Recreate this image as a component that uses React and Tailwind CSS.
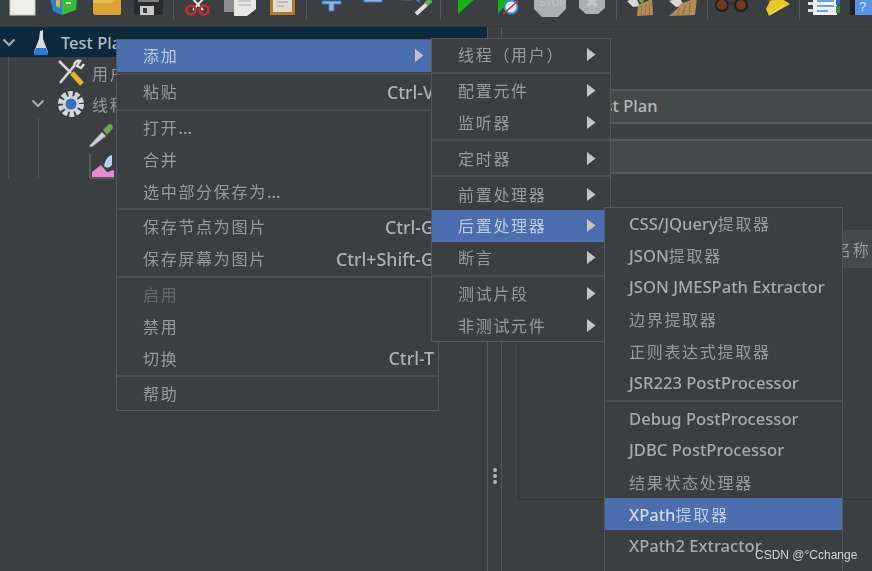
import React from 'react';

const cjkFont = '[font-family:"Noto_Sans_CJK_SC","Noto_Sans",sans-serif]';

// split mixed labels so latin and chinese can have their own size
const Txt = ({ children }) => {
  const parts = children.match(/[\u0000-\u024f]+|[^\u0000-\u024f]+/g) || [];
  return (
    <>
      {parts.map((p, i) =>
        /^[\u0000-\u024f]/.test(p) ? (
          <span key={i} className="text-[16.6px] font-medium [font-family:'Noto_Sans',sans-serif]">{p}</span>
        ) : (
          <span key={i} className="text-[16px] tracking-[1.7px] opacity-85 [font-family:'Noto_Sans_CJK_SC',sans-serif]">{p}</span>
        )
      )}
    </>
  );
};

const Arrow = ({ className }) => (
  <svg width="9" height="13" viewBox="0 0 9 13" className={className}>
    <path d="M0 0 L8.5 6.5 L0 13 Z" fill="#c4c4c4" />
  </svg>
);

const Item = ({ label, shortcut, arrow, active, disabled, pad = 'pl-[26px]', arrowClass = 'mr-[14px]' }) => (
  <div className={`flex h-[31.8px] shrink-0 items-center justify-between whitespace-nowrap leading-[22px] ${pad} ${active ? 'bg-[#4b6eaf] text-[#d2dbea]' : disabled ? 'text-[#6e7072]' : 'text-[#a8aaab]'}`}>
    <span><Txt>{label}</Txt></span>
    {shortcut && <span className="pr-[4px] text-[17.8px] font-medium text-[#aeb0b1] [font-family:'Noto_Sans',sans-serif]">{shortcut}</span>}
    {arrow && <Arrow className={arrowClass} />}
  </div>
);

const Sep = () => (
  <div className="flex h-[4px] shrink-0 items-center">
    <div className="h-[2px] w-full bg-[#4c4e50]" />
  </div>
);

const Ico = ({ x, w, className, children }) => (
  <svg width={w} height="27" viewBox={`${x} 0 ${w} 27`} className={`shrink-0 ${className}`}>
    {children}
  </svg>
);

const ToolSep = ({ className }) => <div className={`h-[20px] w-px shrink-0 bg-[#55585a] ${className}`} />;

const Toolbar = () => (
  <div className="flex h-[27px] shrink-0 items-start overflow-hidden border-b border-[#36383a] bg-[#3c3f41]">
    <Ico x={9} w={27} className="ml-[9px]">
      <rect x="10" y="-4" width="25" height="19" fill="#eeeeea" stroke="#c8c8c4" />
    </Ico>
    <Ico x={49} w={28} className="ml-[13px]">
      <path d="M50 -2 L62 -2 L62 15 L53 11 Z" fill="#2f7fd0" />
      <path d="M62 -2 L77 -2 L76 10 L62 15 Z" fill="#3cb83c" />
      <path d="M56 -2 L60 -2 L60 8 L56 6 Z" fill="#e0b030" />
      <rect x="66" y="2" width="5" height="2" fill="#b8e8b8" />
    </Ico>
    <Ico x={92} w={29} className="ml-[15px]">
      <path d="M93 -2 L121 -2 L121 13 Q121 15 118 15 L96 15 Q93 15 93 12 Z" fill="#d9a335" />
      <path d="M93 3 L112 3 L120 -2 L93 -2 Z" fill="#eabb55" />
    </Ico>
    <Ico x={133} w={31} className="ml-[12px]">
      <rect x="134" y="-4" width="29" height="19" rx="2" fill="#2b2b2b" />
      <rect x="138" y="-4" width="21" height="6" fill="#7b7d7f" />
      <rect x="140" y="6" width="14" height="9" fill="#c8c8c8" />
      <rect x="143" y="8" width="4" height="5" fill="#3a3a3a" />
    </Ico>
    <ToolSep className="ml-[9px]" />
    <Ico x={185} w={25} className="ml-[11px]">
      <path d="M192 -2 L203 10 M204 -2 L193 10" stroke="#e8e8e8" strokeWidth="2" />
      <circle cx="191" cy="10" r="4.5" fill="none" stroke="#cf2a26" strokeWidth="2.5" />
      <circle cx="204" cy="10" r="4.5" fill="none" stroke="#cf2a26" strokeWidth="2.5" />
    </Ico>
    <Ico x={224} w={32} className="ml-[14px]">
      <rect x="224" y="-4" width="20" height="16" fill="#8d8f90" />
      <path d="M234 -4 L256 -4 L256 9 L247 16 L234 16 Z" fill="#e8e8e6" />
      <path d="M238 1 H251 M238 5 H251" stroke="#a8a8a8" />
    </Ico>
    <Ico x={269} w={26} className="ml-[13px]">
      <rect x="270" y="-4" width="25" height="19" rx="1" fill="#b27a2a" />
      <rect x="273" y="-4" width="19" height="16" fill="#ddddd8" />
      <path d="M277 2 H288 M277 6 H284" stroke="#9a9a9a" />
    </Ico>
    <ToolSep className="ml-[11px]" />
    <Ico x={321} w={21} className="ml-[14px]">
      <path d="M322 1 H341 V4 H334 V11 H329 V4 H322 Z" fill="#8fb4e0" stroke="#3f76bd" />
    </Ico>
    <Ico x={363} w={20} className="ml-[21px]">
      <rect x="364" y="-3" width="18" height="5" fill="#8fb4e0" stroke="#3f76bd" />
    </Ico>
    <Ico x={400} w={32} className="ml-[17px]">
      <path d="M401 0 H412" stroke="#555" strokeWidth="2" />
      <path d="M414 -1 L420 -1 L420 3 Z" fill="#2b78d8" />
      <path d="M416 14 L428 3" stroke="#dcdcdc" strokeWidth="4" />
      <path d="M426 4 L431 0" stroke="#5fae55" strokeWidth="5" />
    </Ico>
    <ToolSep className="ml-[8px]" />
    <Ico x={457} w={20} className="ml-[16px]">
      <path d="M458 -3 L477 -3 L458 14 Z" fill="#15b215" />
    </Ico>
    <Ico x={497} w={22} className="ml-[20px]">
      <path d="M498 -3 L512 -3 L498 14 Z" fill="#15b215" />
      <circle cx="511" cy="7" r="6.5" fill="#dfe8f2" stroke="#3f86d8" strokeWidth="2" />
      <path d="M503 14 L518 1" stroke="#d8342c" strokeWidth="1.5" />
    </Ico>
    <Ico x={533} w={33} className="ml-[14px]">
      <path d="M534 -3 L566 -3 L566 9 L558 17 L542 17 L534 9 Z" fill="#adafb0" />
      <text x="539" y="6" fontSize="10" fontWeight="700" fill="#bcbebf" fontFamily="Liberation Sans, sans-serif">STOP</text>
    </Ico>
    <Ico x={578} w={27} className="ml-[12px]">
      <path d="M579 -3 L605 -3 L605 8 L598 14 L586 14 L579 8 Z" fill="#adafb0" />
      <path d="M587 -2 L597 6 M597 -2 L587 6" stroke="#c6c8c9" strokeWidth="3" />
    </Ico>
    <ToolSep className="ml-[11px]" />
    <Ico x={625} w={28} className="ml-[8px]">
      <path d="M627 1 L636 -2 L640 6 L633 7 Z" fill="#d8d8d4" />
      <path d="M637 -2 L645 -2 L642 4 Z" fill="#6da84a" />
      <path d="M638 5 L652 -1 L653 15 L637 16 Z" fill="#b18d5a" />
      <path d="M642 6 L641 15 M646 4 L645 15 M650 2 L649 15" stroke="#8f6f40" />
    </Ico>
    <Ico x={668} w={29} className="ml-[15px]">
      <path d="M669 1 L680 -2 L684 6 L676 7 Z" fill="#d8d8d4" />
      <path d="M680 4 L697 -2 L695 15 L669 16 L678 8 Z" fill="#b18d5a" />
      <path d="M680 8 L677 15 M685 6 L683 15 M690 3 L689 15" stroke="#8f6f40" />
    </Ico>
    <ToolSep className="ml-[10px]" />
    <Ico x={715} w={34} className="ml-[7px]">
      <circle cx="722" cy="5" r="6" fill="#6a3d1e" stroke="#1f1f1f" strokeWidth="2" />
      <circle cx="741" cy="5" r="6" fill="#6a3d1e" stroke="#1f1f1f" strokeWidth="2" />
      <rect x="728" y="2" width="7" height="3" fill="#333" />
    </Ico>
    <Ico x={762} w={28} className="ml-[13px]">
      <path d="M764 -3 L772 -1 L770 2 Z" fill="#c8362c" />
      <path d="M770 1 L779 -3 L790 4 L769 16 L766 9 Z" fill="#e6c929" />
      <path d="M771 14 L784 5" stroke="#f4e27a" />
    </Ico>
    <ToolSep className="ml-[9px]" />
    <Ico x={808} w={32} className="ml-[8px]">
      <rect x="813" y="-3" width="24" height="18" fill="#f2f2f2" />
      <path d="M817 1 H834 M817 6 H834 M817 11 H828" stroke="#3f86d8" strokeWidth="1.5" />
      <rect x="808" y="2" width="7" height="3" fill="#dddddd" />
      <rect x="808" y="9" width="7" height="3" fill="#dddddd" />
      <rect x="836" y="-3" width="4" height="8" fill="#2e63b8" />
      <rect x="836" y="6" width="4" height="7" fill="#2f8f34" />
    </Ico>
    <Ico x={850} w={22} className="ml-[10px]">
      <rect x="850" y="-3" width="5" height="18" fill="#222" />
      <rect x="855" y="-3" width="18" height="18" fill="#5a94e8" />
      <text x="859" y="11" fontSize="13" fill="#d8e6fa" fontFamily="Liberation Sans, sans-serif">?</text>
    </Ico>
  </div>
);

const Chevron = ({ className }) => (
  <svg width="14" height="9" viewBox="0 0 14 9" className={className}>
    <path d="M1.5 1.5 L7 7 L12.5 1.5" fill="none" stroke="#a9abac" strokeWidth="2.2" />
  </svg>
);

const TreePane = () => (
  <div className="relative w-[487px] shrink-0 text-[#a6a8a9]">
    <div className="flex h-[30px] items-center bg-[#0d293e]">
      <Chevron className="ml-[2px]" />
      <svg width="18" height="30" viewBox="0 0 18 30" className="ml-[16px]">
        <path d="M8 4 L11 3 L11 12 L16 25 Q16 28 13 28 L5 28 Q2 28 2 25 L7 12 Z" fill="#d8dde2" />
        <path d="M4 21 L14 21 L16 26 Q16 28 13 28 L5 28 Q2 28 2 26 Z" fill="#2a7ad8" />
      </svg>
      <span className="ml-[11px] mt-[2px] whitespace-nowrap text-[16.5px] font-medium text-[#b4bcc4] [font-family:'Noto_Sans',sans-serif]">Test Plan</span>
    </div>
    <div className="absolute left-[8px] top-[30px] h-[121px] w-px bg-[#505254]" />
    <div className="absolute left-[38px] top-[91px] h-[60px] w-px bg-[#505254]" />
    <div className="flex h-[31px] items-center pl-[57px]">
      <svg width="28" height="28" viewBox="0 0 28 28">
        <path d="M2 2 L14 14" stroke="#d8d8d8" strokeWidth="2.5" />
        <path d="M27 5 L24 9 L20 7 L23 2 Q18 1 17 7 L3 24" fill="none" stroke="#d8d8d8" strokeWidth="2.5" />
        <path d="M15 14 L25 25" stroke="#e8b31e" strokeWidth="5" />
      </svg>
      <span className={`ml-[7px] whitespace-nowrap text-[16px] tracking-[1.7px] opacity-85 ${cjkFont}`}>用户定义的变量</span>
    </div>
    <div className="flex h-[31px] items-center pl-[31px]">
      <Chevron />
      <svg width="28" height="28" viewBox="0 0 28 28" className="ml-[12px]">
        <circle cx="14" cy="14" r="10" fill="none" stroke="#d4d6d8" strokeWidth="6" strokeDasharray="4.5 1.8" />
        <circle cx="14" cy="14" r="8" fill="#cfd6de" />
        <circle cx="14" cy="14" r="5.5" fill="#3a6fc0" />
      </svg>
      <span className={`ml-[7px] whitespace-nowrap text-[16px] tracking-[1.7px] opacity-85 ${cjkFont}`}>线程组</span>
    </div>
    <div className="flex h-[31px] items-center pl-[87px]">
      <svg width="28" height="28" viewBox="0 0 28 28">
        <path d="M2 25 L15 11 L19 15 L5 26 Z" fill="#cfcfcf" stroke="#777" />
        <path d="M16 9 L22 3 Q26 3 26 7 L20 14 Z" fill="#6fa75a" />
      </svg>
    </div>
    <div className="flex h-[31px] items-center pl-[89px]">
      <svg width="26" height="26" viewBox="0 0 26 26">
        <path d="M1 1 V25 H25" fill="none" stroke="#777" />
        <path d="M3 24 L3 19 L12 12 L18 19 L25 17 V24 Z" fill="#e88ad0" />
        <path d="M15 13 Q17 3 23 2 V12 Q19 17 15 13 Z" fill="#b8d2f0" />
      </svg>
    </div>
  </div>
);

const Field = ({ children }) => (
  <div className="flex h-[35px] items-center border-y-2 border-[#55585a] bg-[#45494a] pl-[12px] text-[16.5px] font-medium text-[#b4b6b7] [font-family:'Noto_Sans',sans-serif]">
    {children}
  </div>
);

const RightPane = () => (
  <div className="relative flex min-w-0 flex-1 flex-col border-l border-[#55585a] pt-[62px]">
    <div className="ml-[70px] flex flex-col gap-[15px]">
      <Field><span className="ml-[3px]">Test Plan</span></Field>
      <Field />
    </div>
    <div className="ml-[16px] mt-[56px] h-[270px] border-b border-l border-[#313335]">
      <div className="flex h-[38px] items-center overflow-hidden border-y border-[#4a4d4f] bg-[#45494a] pl-[316px] text-[#a6a8a9]">
        <span className="whitespace-nowrap text-[16px] tracking-[1.7px] opacity-85 [font-family:'Noto_Sans_CJK_SC',sans-serif]">名称</span>
      </div>
    </div>
    <div className="absolute -left-[9px] top-[441px] flex flex-col gap-[2px]">
      <div className="h-[4px] w-[4px] rounded-full bg-[#b4b6b7]" />
      <div className="h-[4px] w-[4px] rounded-full bg-[#b4b6b7]" />
      <div className="h-[4px] w-[4px] rounded-full bg-[#b4b6b7]" />
    </div>
  </div>
);

export default function App() {
  return (
    <div className="relative h-[571px] w-[872px] overflow-hidden bg-[#3c3f41]">
      <div className="flex h-full flex-col blur-[0.6px]">
        <Toolbar />
        <div className="flex min-h-0 flex-1">
          <TreePane />
          <div className="w-[14px] shrink-0 border-l border-[#55585a]" />
          <RightPane />
        </div>
      </div>

      {/* popup menus */}
      <div className="absolute left-[116px] top-[39px] flex w-[323px] flex-col border border-[#55585a] bg-[#3c3f41] blur-[0.6px]">
        <Item label="添加" arrow active />
        <Sep />
        <Item label="粘贴" shortcut="Ctrl-V" />
        <Sep />
        <Item label="打开..." />
        <Item label="合并" />
        <Item label="选中部分保存为..." />
        <Sep />
        <Item label="保存节点为图片" shortcut="Ctrl-G" />
        <Item label="保存屏幕为图片" shortcut="Ctrl+Shift-G" />
        <Sep />
        <Item label="启用" disabled />
        <Item label="禁用" />
        <Item label="切换" shortcut="Ctrl-T" />
        <Sep />
        <Item label="帮助" />
      </div>

      <div className="absolute left-[431px] top-[38px] flex w-[180px] flex-col border border-[#55585a] bg-[#3c3f41] blur-[0.6px]">
        <Item label="线程（用户）" arrow />
        <Sep />
        <Item label="配置元件" arrow />
        <Item label="监听器" arrow />
        <Sep />
        <Item label="定时器" arrow />
        <Sep />
        <Item label="前置处理器" arrow />
        <Item label="后置处理器" arrow active />
        <Item label="断言" arrow />
        <Sep />
        <Item label="测试片段" arrow />
        <Item label="非测试元件" arrow />
      </div>

      <div className="absolute left-[604px] top-[207px] flex w-[239px] flex-col border border-[#55585a] bg-[#3c3f41] blur-[0.6px]">
        <Item label="CSS/JQuery提取器" pad="pl-[24px]" />
        <Item label="JSON提取器" pad="pl-[24px]" />
        <Item label="JSON JMESPath Extractor" pad="pl-[24px]" />
        <Item label="边界提取器" pad="pl-[24px]" />
        <Item label="正则表达式提取器" pad="pl-[24px]" />
        <Item label="JSR223 PostProcessor" pad="pl-[24px]" />
        <Sep />
        <Item label="Debug PostProcessor" pad="pl-[24px]" />
        <Item label="JDBC PostProcessor" pad="pl-[24px]" />
        <Item label="结果状态处理器" pad="pl-[24px]" />
        <Item label="XPath提取器" pad="pl-[24px]" active />
        <Item label="XPath2 Extractor" pad="pl-[24px]" />
        <Item label="BeanShell PostProcessor" pad="pl-[24px]" />
      </div>

      {/* watermark */}
      <div className="absolute left-[755px] top-[546px] whitespace-nowrap text-[12px] text-[#d4d4d4] [font-family:'Liberation_Sans',sans-serif]">
        CSDN @°Cchange
      </div>
    </div>
  );
}
